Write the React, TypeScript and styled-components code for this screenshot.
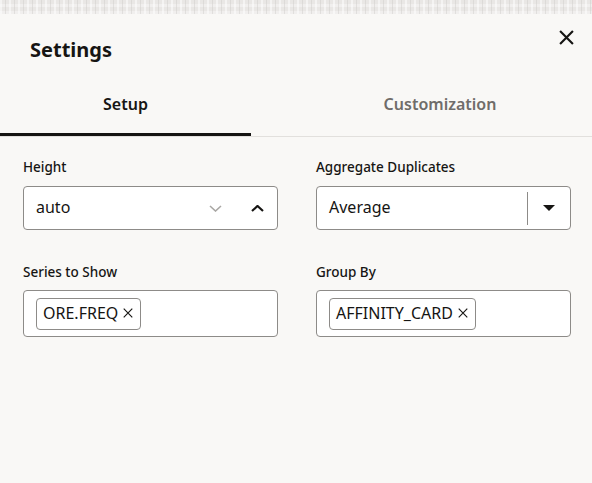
import React from "react";
import styled, { createGlobalStyle } from "styled-components";

const Global = createGlobalStyle`
  html, body { margin: 0; padding: 0; background: #f9f8f6; }
  body { font-family: "Noto Sans", "Open Sans", sans-serif; color: #161513; }
  * { box-sizing: border-box; }
`;

const Page = styled.div`
  width: 592px;
  height: 483px;
  background: #f9f8f6;
  display: flex;
  flex-direction: column;
  overflow: hidden;
`;

const TopStrip = styled.div`
  height: 14px;
  flex: none;
  background-color: #e9e7e5;
  background-image:
    repeating-linear-gradient(90deg, rgba(255,255,255,0.5) 0 2px, transparent 2px 5px, rgba(205,203,200,0.45) 5px 6px, transparent 6px 9px),
    repeating-linear-gradient(0deg, rgba(255,255,255,0.35) 0 3px, transparent 3px 7px);
`;

const Header = styled.div`
  display: flex;
  justify-content: space-between;
  align-items: flex-start;
  padding: 15px 18px 0 30px;
`;

const Title = styled.h1`
  margin: 7px 0 0;
  font-size: 20px;
  line-height: 28px;
  font-weight: 700;
  color: #161513;
`;

const CloseButton = styled.button`
  border: none;
  background: none;
  padding: 0;
  width: 16px;
  height: 16px;
  display: flex;
  align-items: center;
  justify-content: center;
  cursor: pointer;
`;

const Tabs = styled.div`
  display: flex;
  margin-top: 8px;
  border-bottom: 1px solid #e2e0dd;
  overflow: hidden;
`;

const Tab = styled.div<{ $active?: boolean }>`
  flex: none;
  width: ${(p) => (p.$active ? "251px" : "378px")};
  height: 64px;
  display: flex;
  align-items: center;
  justify-content: center;
  padding-top: 2px;
  font-size: 16px;
  font-weight: 600;
  color: ${(p) => (p.$active ? "#161513" : "#6f6c69")};
  border-bottom: 3px solid ${(p) => (p.$active ? "#161513" : "transparent")};
`;

const Form = styled.div`
  display: grid;
  grid-template-columns: 255px 255px;
  column-gap: 38px;
  row-gap: 32px;
  padding: 20px 21px 0 23px;
`;

const Field = styled.div`
  display: flex;
  flex-direction: column;
`;

const Label = styled.label<{ $gap?: number }>`
  font-size: 13.5px;
  line-height: 20px;
  font-weight: 500;
  color: #161513;
  margin-bottom: ${(p) => p.$gap ?? 9}px;
`;

const Box = styled.div<{ $h?: number }>`
  height: ${(p) => p.$h ?? 44}px;
  background: #fff;
  border: 1px solid #8d8b88;
  border-radius: 4px;
  display: flex;
  align-items: center;
`;

const Value = styled.span`
  flex: 1;
  font-size: 16px;
  padding: 0 0 3px 12px;
  color: #161513;
`;

const IconCell = styled.span<{ $w: number }>`
  width: ${(p) => p.$w}px;
  display: flex;
  align-items: center;
  justify-content: center;
  align-self: stretch;
`;

const Divider = styled.span`
  width: 1px;
  height: 33px;
  background: #8d8b88;
`;

const ChipArea = styled.div`
  display: flex;
  align-items: center;
  padding-left: 12px;
`;

const Chip = styled.span`
  height: 32px;
  display: inline-flex;
  align-items: center;
  gap: 5px;
  padding: 0 7px 2px 6px;
  border: 1px solid #8d8b88;
  border-radius: 4px;
  font-size: 16px;
  color: #161513;
`;

const XIcon = ({ size, stroke }: { size: number; stroke: number }) => (
  <svg width={size} height={size} viewBox="0 0 14 14">
    <path d="M1 1 L13 13 M13 1 L1 13" stroke="#161513" strokeWidth={stroke} strokeLinecap="butt" fill="none" />
  </svg>
);

export default function App() {
  return (
    <Page>
      <Global />
      <TopStrip />
      <Header>
        <Title>Settings</Title>
        <CloseButton aria-label="Close">
          <XIcon size={15} stroke={2} />
        </CloseButton>
      </Header>
      <Tabs>
        <Tab $active>Setup</Tab>
        <Tab>Customization</Tab>
      </Tabs>
      <Form>
        <Field>
          <Label>Height</Label>
          <Box>
            <Value>auto</Value>
            <IconCell $w={44}>
              <svg width="13" height="7" viewBox="0 0 13 7">
                <path d="M1 1 L6.5 6 L12 1" stroke="#a9a7a4" strokeWidth="1.6" fill="none" />
              </svg>
            </IconCell>
            <IconCell $w={40}>
              <svg width="13" height="7" viewBox="0 0 13 7">
                <path d="M1 6 L6.5 1 L12 6" stroke="#161513" strokeWidth="2.2" fill="none" />
              </svg>
            </IconCell>
          </Box>
        </Field>
        <Field>
          <Label>Aggregate Duplicates</Label>
          <Box>
            <Value>Average</Value>
            <Divider />
            <IconCell $w={42}>
              <svg width="12" height="6" viewBox="0 0 12 6">
                <path d="M0 0 L12 0 L6 6 Z" fill="#161513" />
              </svg>
            </IconCell>
          </Box>
        </Field>
        <Field>
          <Label $gap={8}>Series to Show</Label>
          <Box $h={47}>
            <ChipArea>
              <Chip>
                ORE.FREQ
                <XIcon size={10} stroke={1.6} />
              </Chip>
            </ChipArea>
          </Box>
        </Field>
        <Field>
          <Label $gap={8}>Group By</Label>
          <Box $h={47}>
            <ChipArea>
              <Chip>
                AFFINITY_CARD
                <XIcon size={10} stroke={1.6} />
              </Chip>
            </ChipArea>
          </Box>
        </Field>
      </Form>
    </Page>
  );
}
